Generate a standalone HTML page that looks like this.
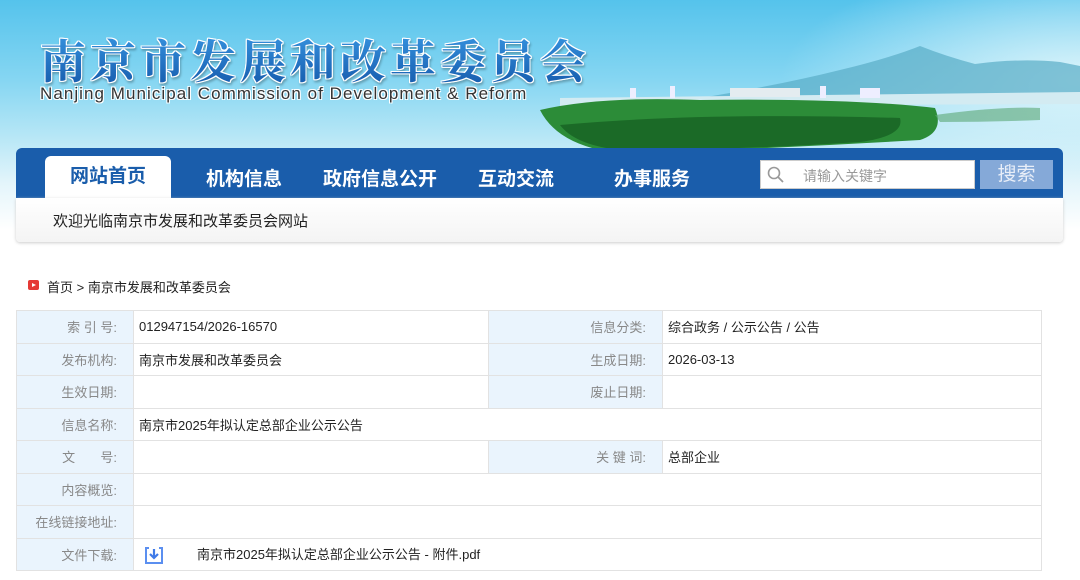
<!DOCTYPE html>
<html><head><meta charset="utf-8">
<style>
*{margin:0;padding:0;box-sizing:border-box}
body{width:1080px;height:580px;overflow:hidden;background:#fff;font-family:"Liberation Sans","Noto Sans CJK SC",sans-serif;position:relative}
.hdr{position:absolute;left:0;top:0;width:1080px;height:230px;background:radial-gradient(ellipse 300px 120px at 1080px 80px,rgba(230,248,252,.9),rgba(230,248,252,0)),linear-gradient(180deg,#55c3ec 0%,#86d6f2 35%,#b8e7f6 60%,#e4f5fb 80%,#fff 100%);overflow:hidden}
.a{position:absolute}
.t1{left:40px;top:26px;font-size:46px;font-weight:700;letter-spacing:4px;font-family:"Noto Serif CJK SC","Noto Sans CJK SC",serif;background:linear-gradient(180deg,#3a9ae6,#1356a8);-webkit-background-clip:text;background-clip:text;color:transparent;filter:drop-shadow(1px 0 0 #fff) drop-shadow(-1px 0 0 #fff) drop-shadow(0 1px 0 #fff) drop-shadow(0 -1px 0 #fff) drop-shadow(1px 2px 1px rgba(0,0,0,.25))}
.t2{left:40px;top:84px;font-size:17px;color:#333;letter-spacing:1.05px;text-shadow:1px 1px 0 #fff,-1px -1px 0 #fff,1px -1px 0 #fff,-1px 1px 0 #fff}
.nav{left:16px;top:148px;width:1047px;height:50px;background:#1a5dab;border-radius:6px 6px 0 0}
.tab{left:45px;top:156px;width:126px;height:42px;background:#fff;border-radius:6px 6px 0 0;color:#1a5dab;font-size:19px;font-weight:bold;text-align:center;line-height:42px}
.ni{top:164px;color:#fff;font-size:19px;font-weight:bold}
.srch{left:760px;top:160px;width:215px;height:29px;background:#fff;border:1px solid #ccc}
.btn{left:980px;top:160px;width:73px;height:29px;background:#85a9d8;color:#e8eef8;font-size:19px;text-align:center;line-height:29px}
.pan{left:16px;top:198px;width:1047px;height:44px;background:linear-gradient(#fff,#f4f4f4);box-shadow:0 1px 3px #ccc;border-radius:0 0 4px 4px}
table{position:absolute;left:16px;top:310px;border-collapse:collapse;width:1026px;font-size:13px}
td{border:1px solid #e2e2e2;height:32.5px;padding:0 5px;color:#222}
td.l{background:#eaf4fd;color:#888;text-align:right;padding-right:16px}
</style></head><body>
<div class="hdr">
<svg class="a" style="left:0;top:0" width="1080" height="160">
<path d="M700 98 Q780 85 840 70 Q890 58 920 46 Q945 56 975 64 Q1020 58 1060 62 L1080 66 L1080 100 Z" fill="#58acc6" opacity=".7"/>
<path d="M560 98 L1080 92 L1080 104 L560 106Z" fill="#d3ebf2"/>
<rect x="730" y="88" width="70" height="9" fill="#e4ecf0"/>
<rect x="630" y="88" width="6" height="10" fill="#eef"/><rect x="670" y="86" width="5" height="12" fill="#eef"/>
<rect x="820" y="86" width="6" height="12" fill="#eef"/><rect x="860" y="88" width="20" height="10" fill="#eef"/>
<path d="M540 110 Q600 96 700 100 Q850 98 935 108 Q945 132 920 140 Q820 146 720 150 Q640 152 600 150 Q555 140 540 110Z" fill="#2c8c38"/>
<path d="M560 125 Q700 112 900 118 Q905 136 860 142 Q740 150 620 150 Q575 145 560 125Z" fill="#1b6a27"/>
<path d="M935 115 Q1000 106 1040 108 L1040 120 Q990 122 940 122Z" fill="#5aa774" opacity=".6"/>
</svg>
<div class="a t1">南京市发展和改革委员会</div>
<div class="a t2">Nanjing Municipal Commission of Development &amp; Reform</div>
</div>
<div class="a nav"></div>
<div class="a tab">网站首页</div>
<div class="a ni" style="left:206px">机构信息</div>
<div class="a ni" style="left:323px">政府信息公开</div>
<div class="a ni" style="left:478px">互动交流</div>
<div class="a ni" style="left:614px">办事服务</div>
<div class="a srch"><svg class="a" style="left:6px;top:5px" width="18" height="18"><circle cx="7" cy="7" r="5.5" fill="none" stroke="#999" stroke-width="1.6"/><line x1="11" y1="11" x2="16" y2="16" stroke="#999" stroke-width="1.8"/></svg><span class="a" style="left:42px;top:5px;font-size:14px;color:#999">请输入关键字</span></div>
<div class="a btn">搜索</div>
<div class="a pan"><span class="a" style="left:37px;top:12px;font-size:15px;color:#222">欢迎光临南京市发展和改革委员会网站</span></div>
<div class="a" style="left:28px;top:280px;width:11px;height:10px;background:#e53935;border-radius:2px"><div style="position:absolute;left:4px;top:2.5px;border-left:4px solid #fff;border-top:2.5px solid transparent;border-bottom:2.5px solid transparent"></div></div>
<div class="a" style="left:47px;top:277px;font-size:13px;color:#222">首页 &gt; 南京市发展和改革委员会</div>
<table>
<colgroup><col style="width:117px"><col style="width:355px"><col style="width:174px"><col></colgroup>
<tr><td class="l">索 引 号:</td><td>012947154/2026-16570</td><td class="l">信息分类:</td><td>综合政务 / 公示公告 / 公告</td></tr>
<tr><td class="l">发布机构:</td><td>南京市发展和改革委员会</td><td class="l">生成日期:</td><td>2026-03-13</td></tr>
<tr><td class="l">生效日期:</td><td></td><td class="l">废止日期:</td><td></td></tr>
<tr><td class="l">信息名称:</td><td colspan="3">南京市2025年拟认定总部企业公示公告</td></tr>
<tr><td class="l">文&nbsp;&nbsp;&nbsp;&nbsp;&nbsp;&nbsp;&nbsp;号:</td><td></td><td class="l">关 键 词:</td><td>总部企业</td></tr>
<tr><td class="l">内容概览:</td><td colspan="3"></td></tr>
<tr><td class="l">在线链接地址:</td><td colspan="3"></td></tr>
<tr><td class="l">文件下载:</td><td colspan="3"><svg width="18" height="17" style="vertical-align:middle;margin-left:6px"><path d="M4 1H1V16H17V1H14" fill="none" stroke="#5b8ff0" stroke-width="2"/><path d="M9 2V11M5 7L9 11L13 7" fill="none" stroke="#3f7ae8" stroke-width="2.2"/></svg><span style="margin-left:34px">南京市2025年拟认定总部企业公示公告 - 附件.pdf</span></td></tr>
</table>
</body></html>
